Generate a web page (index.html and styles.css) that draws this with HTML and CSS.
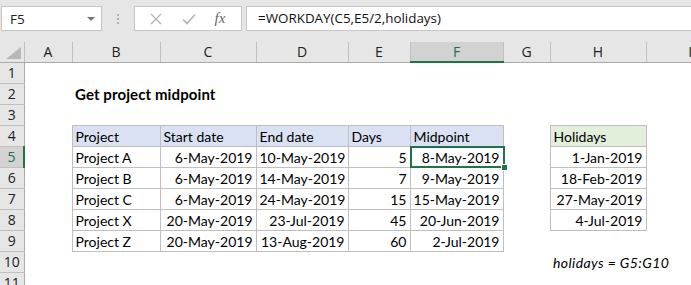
FILE: index.html
```html
<!DOCTYPE html>
<html lang="en">
<head>
    <meta charset="UTF-8">
    <title>Get project midpoint</title>
    <link rel="stylesheet" href="styles.css">
</head>
<body>
    <div class="formula-bar">
        <div class="name-box">
            <span>F5</span>
            <span class="caret"></span>
        </div>
        <div class="grip"><i></i><i></i><i></i></div>
        <div class="fx-buttons">
            <svg class="icon" width="14" height="14" viewBox="0 0 14 14">
                <path d="M2 2 L12 12 M12 2 L2 12" stroke="#b3b3b3" stroke-width="1.3" fill="none"/>
            </svg>
            <svg class="icon" width="14" height="14" viewBox="0 0 14 14">
                <path d="M1 7.5 L5 11.5 L13 2.5" stroke="#b3b3b3" stroke-width="1.6" fill="none"/>
            </svg>
            <span class="fx">fx</span>
        </div>
        <div class="formula-input">=WORKDAY(C5,E5/2,holidays)</div>
    </div>

    <table class="sheet">
        <colgroup>
            <col class="w-rh">
            <col class="w-a">
            <col class="w-b">
            <col class="w-c">
            <col class="w-d">
            <col class="w-e">
            <col class="w-f">
            <col class="w-g">
            <col class="w-h">
            <col class="w-i">
        </colgroup>
        <thead>
            <tr>
                <th class="corner">
                    <svg class="corner-mark" width="15" height="12" viewBox="0 0 15 12"><polygon points="15,0 15,12 0,12" fill="#b8b8b8"/></svg>
                </th>
                <th>A</th>
                <th>B</th>
                <th>C</th>
                <th>D</th>
                <th>E</th>
                <th class="active">F</th>
                <th>G</th>
                <th>H</th>
                <th>I</th>
            </tr>
        </thead>
        <tbody>
            <tr>
                <th>1</th>
                <td></td><td></td><td></td><td></td><td></td><td></td><td></td><td></td><td></td>
            </tr>
            <tr>
                <th>2</th>
                <td></td><td class="title">Get project midpoint</td><td></td><td></td><td></td><td></td><td></td><td></td><td></td>
            </tr>
            <tr>
                <th>3</th>
                <td></td><td></td><td></td><td></td><td></td><td></td><td></td><td></td><td></td>
            </tr>
            <tr>
                <th>4</th>
                <td></td>
                <td class="cell head">Project</td>
                <td class="cell head">Start date</td>
                <td class="cell head">End date</td>
                <td class="cell head">Days</td>
                <td class="cell head">Midpoint</td>
                <td></td>
                <td class="cell head-green">Holidays</td>
                <td></td>
            </tr>
            <tr>
                <th class="active">5</th>
                <td></td>
                <td class="cell">Project A</td>
                <td class="cell num">6-May-2019</td>
                <td class="cell num">10-May-2019</td>
                <td class="cell num">5</td>
                <td class="cell num selected">8-May-2019<span class="sel-box"></span><span class="sel-handle"></span></td>
                <td></td>
                <td class="cell num">1-Jan-2019</td>
                <td></td>
            </tr>
            <tr>
                <th>6</th>
                <td></td>
                <td class="cell">Project B</td>
                <td class="cell num">6-May-2019</td>
                <td class="cell num">14-May-2019</td>
                <td class="cell num">7</td>
                <td class="cell num">9-May-2019</td>
                <td></td>
                <td class="cell num">18-Feb-2019</td>
                <td></td>
            </tr>
            <tr>
                <th>7</th>
                <td></td>
                <td class="cell">Project C</td>
                <td class="cell num">6-May-2019</td>
                <td class="cell num">24-May-2019</td>
                <td class="cell num">15</td>
                <td class="cell num">15-May-2019</td>
                <td></td>
                <td class="cell num">27-May-2019</td>
                <td></td>
            </tr>
            <tr>
                <th>8</th>
                <td></td>
                <td class="cell">Project X</td>
                <td class="cell num">20-May-2019</td>
                <td class="cell num">23-Jul-2019</td>
                <td class="cell num">45</td>
                <td class="cell num">20-Jun-2019</td>
                <td></td>
                <td class="cell num">4-Jul-2019</td>
                <td></td>
            </tr>
            <tr>
                <th>9</th>
                <td></td>
                <td class="cell">Project Z</td>
                <td class="cell num">20-May-2019</td>
                <td class="cell num">13-Aug-2019</td>
                <td class="cell num">60</td>
                <td class="cell num">2-Jul-2019</td>
                <td></td><td></td><td></td>
            </tr>
            <tr>
                <th>10</th>
                <td></td><td></td><td></td><td></td><td></td><td></td><td></td>
                <td class="note">holidays = G5:G10</td>
                <td></td>
            </tr>
            <tr>
                <th>11</th>
                <td></td><td></td><td></td><td></td><td></td><td></td><td></td><td></td><td></td>
            </tr>
        </tbody>
    </table>
</body>
</html>
```

FILE: styles.css
```css
body {
    margin: 0;
    background: #ffffff;
    overflow: hidden;
    font-family: "Open Sans", sans-serif;
}

/* formula bar */
.formula-bar {
    display: flex;
    align-items: flex-start;
    height: 42px;
    padding-top: 6px;
    box-sizing: border-box;
    background: #e6e6e6;
}

.name-box {
    display: flex;
    align-items: center;
    justify-content: space-between;
    width: 101px;
    height: 25px;
    margin-left: 1px;
    padding: 0 6px 0 8px;
    box-sizing: border-box;
    background: #fff;
    border: 1px solid #c6c6c6;
    font-size: 13.5px;
    color: #222;
}

.caret {
    width: 0;
    height: 0;
    border-left: 4px solid transparent;
    border-right: 4px solid transparent;
    border-top: 4px solid #777;
}

.grip {
    display: flex;
    flex-direction: column;
    align-items: center;
    gap: 2px;
    width: 32px;
    padding-top: 8px;
}

.grip i {
    width: 2px;
    height: 2px;
    background: #b0b0b0;
}

.fx-buttons {
    display: flex;
    align-items: center;
    justify-content: space-around;
    width: 108px;
    height: 25px;
    padding: 0 6px 0 4px;
    box-sizing: border-box;
    background: #fff;
    border: 1px solid #c6c6c6;
}

.fx {
    font-family: "Liberation Serif", serif;
    font-style: italic;
    font-size: 15px;
    color: #666;
}

.formula-input {
    flex: 1;
    height: 25px;
    margin-left: 4px;
    padding-left: 11px;
    box-sizing: border-box;
    background: #fff;
    border: 1px solid #c6c6c6;
    border-right: none;
    font-size: 13.4px;
    line-height: 23px;
    color: #111;
}

/* sheet */
.sheet {
    table-layout: fixed;
    border-collapse: collapse;
    width: 734px;
}

.w-rh { width: 24px; }
.w-a { width: 48px; }
.w-b { width: 88px; }
.w-c { width: 96px; }
.w-d { width: 92px; }
.w-e { width: 62px; }
.w-f { width: 93px; }
.w-g { width: 47px; }
.w-h { width: 96px; }
.w-i { width: 88px; }

.sheet thead tr {
    height: 20px;
}

.sheet thead th {
    padding: 0;
    background: #e6e6e6;
    border-left: 1px solid #c0c0c0;
    border-bottom: 1px solid #ababab;
    font-weight: normal;
    font-size: 14px;
    line-height: 18px;
    color: #222;
    text-align: center;
}

.sheet thead th.corner {
    border-left: none;
    vertical-align: bottom;
    padding: 0 3px 3px 0;
}

.corner-mark {
    display: block;
    margin-left: auto;
}

.sheet thead th.active {
    background: #d2d2d2;
    border-bottom: 2px solid #217346;
    color: #217346;
}

.sheet tbody tr {
    height: 21px;
}

.sheet tbody th {
    padding: 0;
    background: #e6e6e6;
    border-right: 1px solid #ababab;
    border-bottom: 1px solid #c0c0c0;
    font-weight: normal;
    font-size: 14px;
    line-height: 18px;
    color: #222;
    text-align: center;
}

.sheet tbody th.active {
    background: #d2d2d2;
    border-right: 2px solid #217346;
    color: #217346;
}

.sheet td {
    padding: 0 3px 1px 3px;
    font-family: Lato, "Open Sans", sans-serif;
    font-size: 14px;
    line-height: 17px;
    color: #000;
    white-space: nowrap;
    vertical-align: bottom;
}

.sheet td.cell {
    border: 1px solid #bfbfbf;
}

.sheet td.num {
    text-align: right;
}

.sheet td.head {
    background: #d9e1f2;
}

.sheet td.head-green {
    background: #e2efda;
}

.sheet td.title {
    font-weight: bold;
    font-size: 15px;
    letter-spacing: 0.1px;
}

.sheet td.note {
    font-style: italic;
    letter-spacing: 0.4px;
}

.sheet td.selected {
    position: relative;
}

.sel-box {
    position: absolute;
    top: -1px;
    left: -1px;
    right: -2px;
    bottom: -1px;
    border: 2px solid #217346;
}

.sel-handle {
    position: absolute;
    right: -5px;
    bottom: -4px;
    width: 5px;
    height: 5px;
    background: #217346;
    border: 1px solid #fff;
}
```
